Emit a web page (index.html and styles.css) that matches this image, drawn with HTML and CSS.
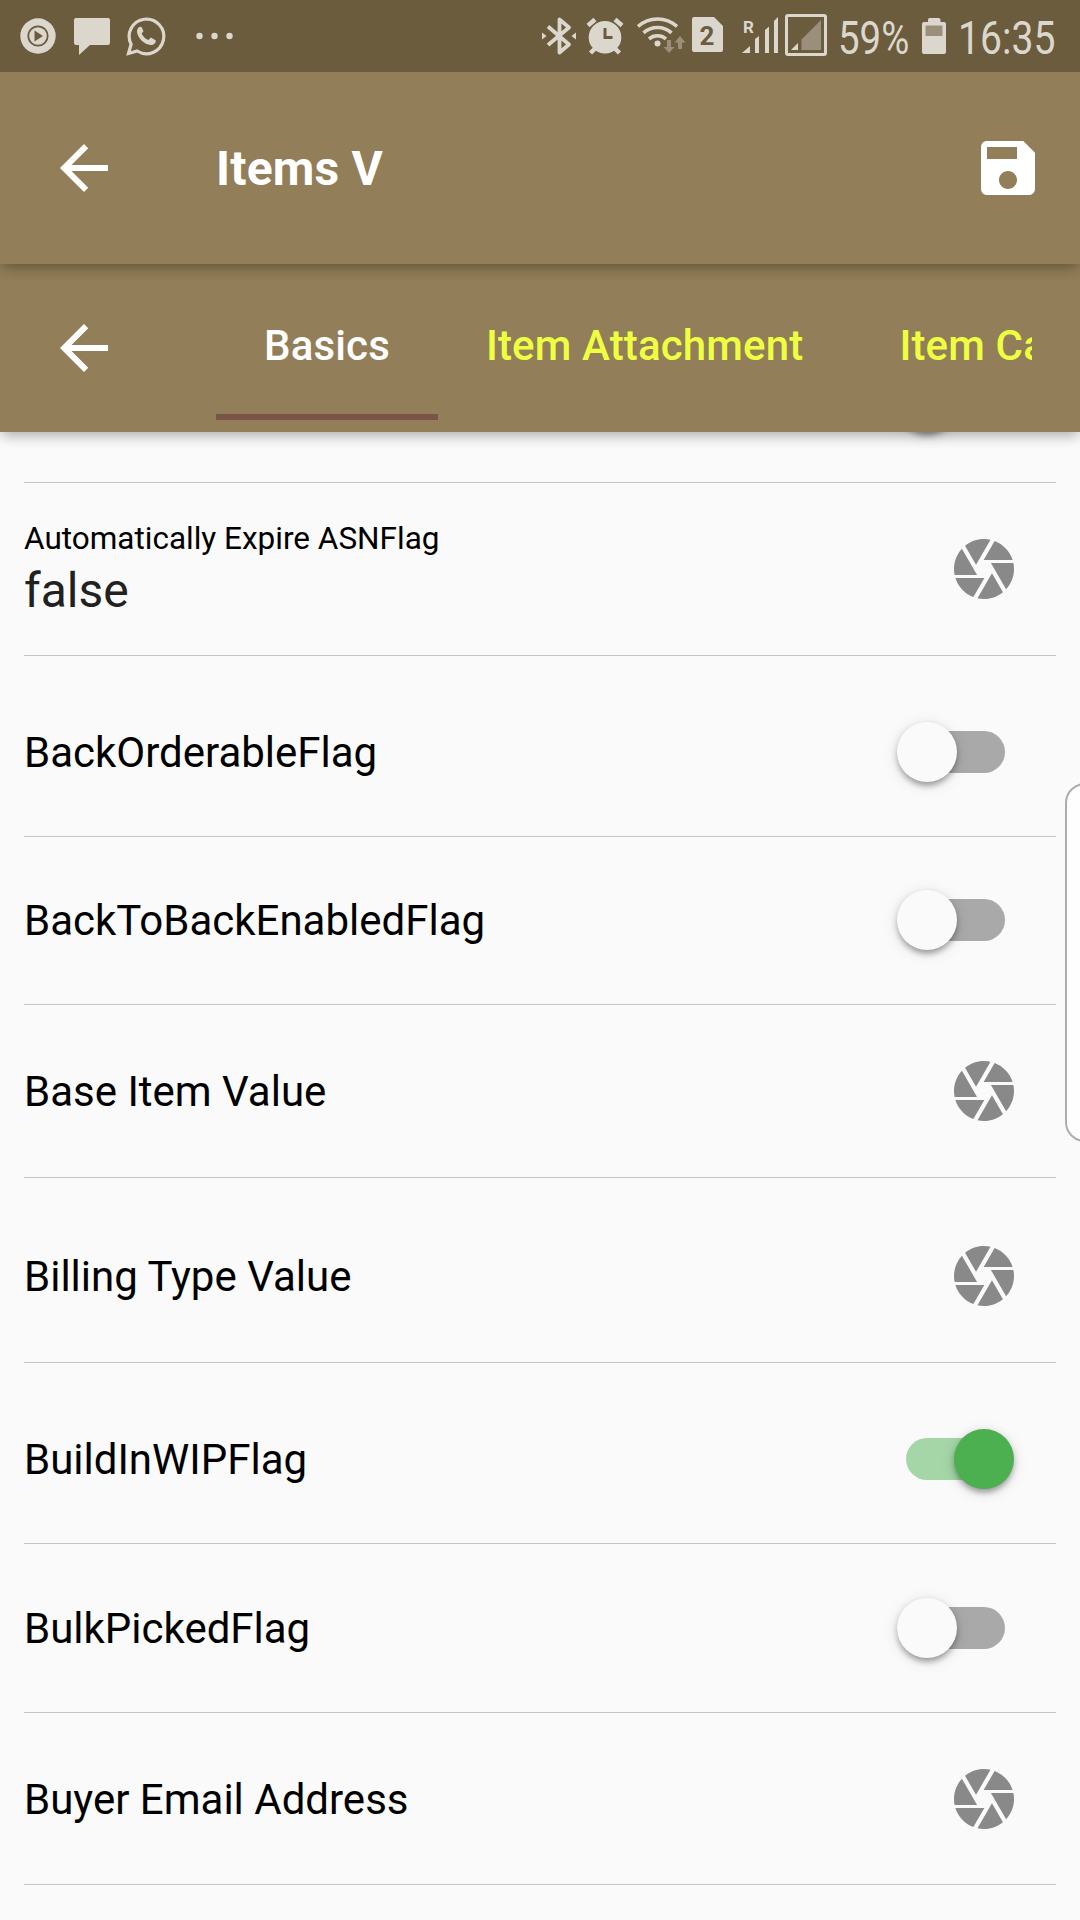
FILE: index.html
```html
<!DOCTYPE html>
<html lang="en">
<head>
<meta charset="utf-8">
<title>Items V</title>
<link rel="stylesheet" href="styles.css">
</head>
<body>
<svg class="defs" aria-hidden="true">
  <symbol id="back" viewBox="0 0 24 24"><path d="M20 11H7.83l5.59-5.59L12 4l-8 8 8 8 1.41-1.41L7.83 13H20v-2z"/></symbol>
  <symbol id="camera" viewBox="0 0 24 24"><path d="M9.4 10.5l4.77-8.26C13.47 2.09 12.75 2 12 2c-2.4 0-4.6.85-6.32 2.25l3.66 6.35.06-.1zM21.54 9c-.92-2.92-3.15-5.26-6-6.34L11.88 9h9.66zm.26 1h-7.49l.29.5 4.76 8.25C21 16.97 22 14.61 22 12c0-.69-.07-1.35-.2-2zM8.54 12l-3.9-6.75C3.01 7.03 2 9.39 2 12c0 .69.07 1.35.2 2h7.49l-1.15-2zm-6.08 3c.92 2.92 3.15 5.26 6 6.34L12.12 15H2.46zm11.27 0l-3.9 6.76c.7.15 1.42.24 2.17.24 2.4 0 4.6-.85 6.32-2.25l-3.66-6.35-.93 1.6z"/></symbol>
</svg>
<div class="screen">
  <header class="status">
    <svg class="status-icons" viewBox="0 0 240 72">
      <circle cx="38" cy="36" r="17.7"/>
      <circle class="cut-line" stroke-width="1.8" cx="38" cy="36" r="9.7"/>
      <path class="cut" d="M34.5 30.5v11l8.5-5.5z"/>
      <path d="M76 18h32q2 0 2 2v23q0 2-2 2H90L79 55V45h-3q-2 0-2-2V20q0-2 2-2z"/>
      <path class="line" stroke-width="3.2" d="M128.5 53.5l2.6-9.2A17.3 17.3 0 1 1 137.2 51z"/>
      <path d="M140 26.8c-2 .6-3.300 2.700-3 5.200.7 6.200 7.500 12.500 13.700 13 2.800.2 5-1.500 5.200-4.500l-5-3-2.400 2.600c-3.200-1.200-5.600-3.500-6.900-6.500l1.900-2.400-2-4.300z"/>
      <circle cx="199.500" cy="36" r="3.200"/><circle cx="214.500" cy="36" r="3.200"/><circle cx="229.500" cy="36" r="3.200"/>
    </svg>
    <svg class="status-icons right" viewBox="530 0 300 72">
      <path class="line" stroke-width="3.8" stroke-linejoin="round" d="M548 26.500l21 18-9.500 8V19.500l9.500 8-21 17.500"/>
      <path d="M542 32.500l4.500 3.500-4.500 3.500zM576 32.500l-4.500 3.500 4.500 3.500z"/>
      <circle cx="605" cy="37.300" r="16.300"/>
      <path class="line" stroke-width="4.5" d="M588 25.500l7-6M622 25.500l-7-6M595.500 48l-5 5M614.500 48l5 5"/>
      <path class="cut-line" stroke-width="3" d="M605 28v9.500h7.500"/>
      <path class="line" stroke-width="3.6" d="M638 26.500a29 29 0 0 1 39 0M643.500 32.800a21 21 0 0 1 28 0M649 38.800a13.500 13.500 0 0 1 17 0"/>
      <circle cx="657.500" cy="43.500" r="3"/>
      <path class="dim" d="M667 40h4v7h3.500l-5.500 6-5.500-6h3.500zM678 49h4v-6.500h3.500L680 36l-5.500 6.500h3.500z"/>
      <path d="M694 17h20l9 9v24q0 2-2 2h-27q-2 0-2-2V19q0-2 2-2z"/>
      <text class="cut sim" x="707" y="44.700" text-anchor="middle">2</text>
      <text class="roam" x="743" y="32.500">R</text>
      <path d="M742 53l8-7v7zM755 39l4-3v17h-4zM765 30l4-3.500V53h-4zM774 21l4-4v36h-4z"/>
      <rect class="line" x="786.500" y="15.500" width="39" height="39" rx="1.500" stroke-width="3"/>
      <path d="M791 50l7-7v7z"/><path class="dim" d="M801.500 50V39.500L821 20v30z"/>
    </svg>
    <span class="status-text percent">59%</span>
    <svg class="battery" viewBox="0 0 24 36"><path d="M7.500 0h9q2 0 2 2v2H22q2 0 2 2v28q0 2-2 2H2q-2 0-2-2V6q0-2 2-2h4V2q0-2 1.500-2z"/><path class="charge" d="M3.500 7.500h17V18h-17z"/></svg>
    <span class="status-text clock">16:35</span>
  </header>
  <div class="appbar">
    <svg class="icon-72"><use href="#back"/></svg>
    <h1>Items V</h1>
    <svg class="icon-72" viewBox="0 0 24 24"><path d="M17.100 3H5c-1.110 0-2 .9-2 2v14c0 1.100.89 2 2 2h14c1.100 0 2-.9 2-2V6.900L17.100 3zm-5.100 16c-1.660 0-3-1.340-3-3s1.340-3 3-3 3 1.340 3 3-1.340 3-3 3zm3-10H5V5h10v4z"/></svg>
  </div>
  <nav class="tabbar">
    <svg class="icon-72"><use href="#back"/></svg>
    <div class="tabs">
      <div class="tab active">Basics</div>
      <div class="tab">Item Attachment</div>
      <div class="tab">Item Category</div>
    </div>
  </nav>
  <main class="list">
    <div class="row row-peek"><span class="switch"></span></div>
    <div class="row row-value"><div class="field"><span class="caption">Automatically Expire ASNFlag</span><span class="value">false</span></div><svg class="camera"><use href="#camera"/></svg></div>
    <div class="row row-first-flag"><span class="label">BackOrderableFlag</span><span class="switch"></span></div>
    <div class="row row-flag"><span class="label">BackToBackEnabledFlag</span><span class="switch"></span></div>
    <div class="row row-base"><span class="label">Base Item Value</span><svg class="camera"><use href="#camera"/></svg></div>
    <div class="row row-billing"><span class="label">Billing Type Value</span><svg class="camera"><use href="#camera"/></svg></div>
    <div class="row row-first-flag"><span class="label">BuildInWIPFlag</span><span class="switch on"></span></div>
    <div class="row row-bulk"><span class="label">BulkPickedFlag</span><span class="switch"></span></div>
    <div class="row row-buyer"><span class="label">Buyer Email Address</span><svg class="camera"><use href="#camera"/></svg></div>
  </main>
  <div class="edge-handle"></div>
</div>
</body>
</html>
```
FILE: styles.css
```css
* { box-sizing: border-box; }
body { margin: 0; background: #fafafa; font-family: Roboto, sans-serif; }
.defs { position: absolute; width: 0; height: 0; }
.screen { position: relative; display: flex; flex-direction: column; width: 1080px; height: 1920px; overflow: hidden; background: #fafafa; }

.status { position: relative; z-index: 3; display: flex; align-items: center; height: 72px; flex: none; background: #6b5c3e; color: #dcd7cd; fill: #dcd7cd; }
.status-icons { width: 240px; height: 72px; flex: none; }
.status-icons.right { width: 300px; margin-left: 290px; }
.line { fill: none; stroke: #dcd7cd; }
.cut { fill: #6b5c3e; }
.cut-line { fill: none; stroke: #6b5c3e; }
.dim { fill: #9a8f7a; }
.sim { font-size: 26px; font-weight: 700; }
.roam { font-size: 17px; font-weight: 700; }
.status-text { flex: none; width: 0; white-space: nowrap; font-size: 46px; line-height: 72px; transform-origin: left center; padding-top: 3px; }
.percent { margin-left: 8px; transform: scaleX(.835); }
.battery { width: 24px; height: 36px; flex: none; margin-left: 84px; }
.charge { fill: #9a8f7a; }
.clock { margin-left: 12px; transform: scaleX(.85); }

.appbar, .tabbar { position: relative; display: flex; align-items: center; flex: none; background: #927e58; color: #fff; fill: #fff; box-shadow: 0 6px 12px -3px rgba(0,0,0,.2), 0 3px 15px rgba(0,0,0,.16); }
.appbar { z-index: 2; height: 192px; padding: 0 36px 0 48px; }
.icon-72 { width: 72px; height: 72px; flex: none; }
.appbar h1 { flex: 1; margin: 0 0 0 96px; padding-top: 2px; font-size: 48px; font-weight: 700; line-height: 56px; letter-spacing: .2px; }
.tabbar { z-index: 1; height: 168px; padding: 0 48px; }
.tabs { display: flex; flex: 1; min-width: 0; height: 144px; margin-left: 96px; overflow: hidden; }
.tab { flex: none; padding: 0 48px; font-size: 42px; font-weight: 500; line-height: 140px; letter-spacing: .15px; color: #eeff41; white-space: nowrap; }
.tab.active { color: #fff; border-bottom: 6px solid #795548; }

.list { display: flex; flex-direction: column; padding: 0 24px; }
.row { display: flex; align-items: center; justify-content: space-between; flex: none; border-bottom: 1px solid #c0c5c9; padding-right: 42px; }
.row-peek { height: 51px; align-items: flex-start; justify-content: flex-end; }
.row-peek .switch { margin-top: -51px; }
.row-value { height: 173px; }
.row-first-flag { height: 181px; padding-top: 12px; }
.row-flag { height: 168px; padding-bottom: 2px; }
.row-bulk { height: 169px; }
.row-base { height: 173px; }
.row-billing { height: 185px; padding-top: 12px; }
.row-buyer { height: 172px; }
.field { display: flex; flex-direction: column; }
.caption { font-size: 31.5px; line-height: 38px; padding-top: 2px; color: #000; }
.value { font-size: 48px; line-height: 58px; padding-top: 4px; color: #212121; }
.label { padding-top: 2px; font-size: 42px; line-height: 50px; color: #000; }
.camera { width: 72px; height: 72px; margin-right: -6px; fill: #898989; }
.switch { position: relative; width: 99px; height: 42px; margin-right: 9px; border-radius: 21px; background: #a9a9a9; }
.switch::after { content: ""; position: absolute; left: -9px; top: -9px; width: 60px; height: 60px; border-radius: 50%; background: #fafafa; box-shadow: 0 6px 6px -3px rgba(0,0,0,.2), 0 3px 6px rgba(0,0,0,.2), 0 3px 15px rgba(0,0,0,.12); }
.switch.on { background: #a4d6a7; }
.switch.on::after { left: 48px; background: #4caf50; }
.edge-handle { position: absolute; left: 1065px; top: 783px; width: 40px; height: 359px; border: 2px solid #adadad; border-radius: 20px; background: #fefefe; }
```
